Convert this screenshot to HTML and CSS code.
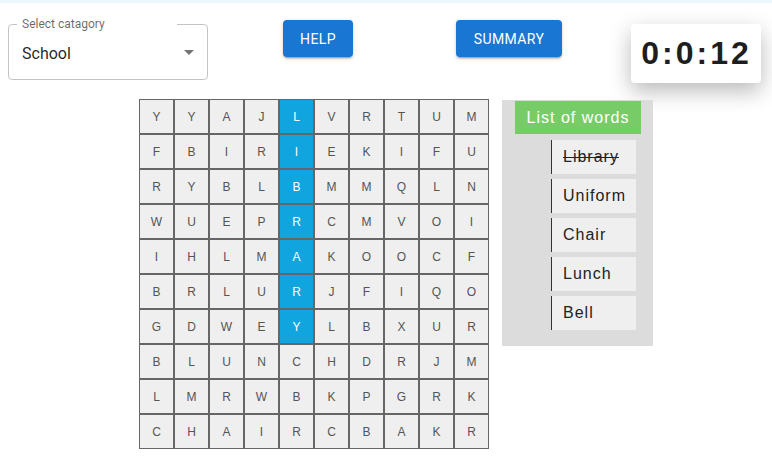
FILE: index.html
```html
<!DOCTYPE html>
<html>
<head>
<meta charset="utf-8">
<link rel="stylesheet" href="styles.css">
</head>
<body>
<div class="strip"></div>
<div class="top">
  <div class="select">
    <span class="select-label">Select catagory</span>
    <span class="select-value">School</span>
    <svg class="select-icon" viewBox="0 0 24 24" width="24" height="24"><path d="M7 10l5 5 5-5z" fill="rgba(0,0,0,0.54)"/></svg>
  </div>
  <button class="btn btn-help">HELP</button>
  <button class="btn btn-summary">SUMMARY</button>
  <div class="timer">0:0:12</div>
</div>
<div class="main">
  <div class="board">
    <div class="cell">Y</div><div class="cell">Y</div><div class="cell">A</div><div class="cell">J</div><div class="cell hit">L</div><div class="cell">V</div><div class="cell">R</div><div class="cell">T</div><div class="cell">U</div><div class="cell">M</div>
    <div class="cell">F</div><div class="cell">B</div><div class="cell">I</div><div class="cell">R</div><div class="cell hit">I</div><div class="cell">E</div><div class="cell">K</div><div class="cell">I</div><div class="cell">F</div><div class="cell">U</div>
    <div class="cell">R</div><div class="cell">Y</div><div class="cell">B</div><div class="cell">L</div><div class="cell hit">B</div><div class="cell">M</div><div class="cell">M</div><div class="cell">Q</div><div class="cell">L</div><div class="cell">N</div>
    <div class="cell">W</div><div class="cell">U</div><div class="cell">E</div><div class="cell">P</div><div class="cell hit">R</div><div class="cell">C</div><div class="cell">M</div><div class="cell">V</div><div class="cell">O</div><div class="cell">I</div>
    <div class="cell">I</div><div class="cell">H</div><div class="cell">L</div><div class="cell">M</div><div class="cell hit">A</div><div class="cell">K</div><div class="cell">O</div><div class="cell">O</div><div class="cell">C</div><div class="cell">F</div>
    <div class="cell">B</div><div class="cell">R</div><div class="cell">L</div><div class="cell">U</div><div class="cell hit">R</div><div class="cell">J</div><div class="cell">F</div><div class="cell">I</div><div class="cell">Q</div><div class="cell">O</div>
    <div class="cell">G</div><div class="cell">D</div><div class="cell">W</div><div class="cell">E</div><div class="cell hit">Y</div><div class="cell">L</div><div class="cell">B</div><div class="cell">X</div><div class="cell">U</div><div class="cell">R</div>
    <div class="cell">B</div><div class="cell">L</div><div class="cell">U</div><div class="cell">N</div><div class="cell">C</div><div class="cell">H</div><div class="cell">D</div><div class="cell">R</div><div class="cell">J</div><div class="cell">M</div>
    <div class="cell">L</div><div class="cell">M</div><div class="cell">R</div><div class="cell">W</div><div class="cell">B</div><div class="cell">K</div><div class="cell">P</div><div class="cell">G</div><div class="cell">R</div><div class="cell">K</div>
    <div class="cell">C</div><div class="cell">H</div><div class="cell">A</div><div class="cell">I</div><div class="cell">R</div><div class="cell">C</div><div class="cell">B</div><div class="cell">A</div><div class="cell">K</div><div class="cell">R</div>
  </div>
  <div class="panel">
    <div class="panel-title">List of words</div>
    <ul class="words">
      <li class="word found">Library</li>
      <li class="word">Uniform</li>
      <li class="word">Chair</li>
      <li class="word">Lunch</li>
      <li class="word">Bell</li>
    </ul>
  </div>
</div>
</body>
</html>
```
FILE: styles.css
```css
* { box-sizing: border-box; }
html, body { margin: 0; padding: 0; background: #fff; }
body { font-family: "Liberation Sans", Arial, sans-serif; width: 772px; height: 456px; overflow: hidden; }

.strip { height: 3px; background: #eef7fc; }

.top {
  height: 96px;
  padding: 17px 0 0 8px;
  display: flex;
  align-items: flex-start;
}

.select {
  position: relative;
  margin-top: 4px;
  width: 200px;
  height: 56px;
  border: 1px solid #c4c4c4;
  border-radius: 4px;
  display: flex;
  align-items: center;
  padding-left: 13px;
  font-family: Roboto, "Liberation Sans", sans-serif;
}
.select-label {
  position: absolute;
  left: 8px;
  top: -8px;
  padding: 0 72px 0 5px;
  background: #fff;
  font-size: 12px;
  line-height: 14px;
  color: rgba(0,0,0,0.6);
}
.select-value {
  font-size: 16px;
  color: rgba(0,0,0,0.87);
  margin-top: 2px;
}
.select-icon {
  position: absolute;
  right: 6px;
  top: 15px;
}

.btn {
  font-family: Roboto, "Liberation Sans", sans-serif;
  font-weight: 400;
  font-size: 14px;
  letter-spacing: 0.4px;
  color: #fff;
  background: #1976d2;
  border: none;
  border-radius: 4px;
  height: 37px;
  padding: 0 16px;
  box-shadow: 0 3px 1px -2px rgba(0,0,0,0.2), 0 2px 2px 0 rgba(0,0,0,0.14), 0 1px 5px 0 rgba(0,0,0,0.12);
}
.btn-help { margin-left: 75px; width: 70px; }
.btn-summary { margin-left: 103px; width: 106px; }

.timer {
  margin-top: 4px;
  margin-left: 69px;
  width: 130px;
  height: 59px;
  background: #fff;
  border-radius: 4px;
  box-shadow: 0 8px 22px rgba(0,0,0,0.28);
  font-weight: bold;
  font-size: 32px;
  letter-spacing: 3px;
  color: #1e1e1e;
  display: flex;
  align-items: center;
  justify-content: center;
  padding-left: 1px;
}

.main {
  display: flex;
  align-items: flex-start;
  padding-left: 139px;
}

.board {
  display: grid;
  grid-template-columns: repeat(10, 35px);
  grid-auto-rows: 35px;
}
.cell {
  border: 1px solid #666;
  background: #efefef;
  color: #555;
  font-size: 12px;
  display: flex;
  align-items: center;
  justify-content: center;
}
.cell.hit { background: #10a5de; color: #fff; }

.panel {
  margin-left: 13px;
  margin-top: 1px;
  width: 151px;
  background: #dcdcdc;
  padding: 1px 12px 16px 13px;
}
.panel-title {
  height: 33px;
  background: #78cc68;
  color: #fff;
  font-size: 16px;
  letter-spacing: 1px;
  display: flex;
  align-items: center;
  justify-content: center;
}
.words {
  list-style: none;
  margin: 6px 0 0 36px;
  padding: 0;
  display: flex;
  flex-direction: column;
  gap: 5px;
}
.word {
  width: 85px;
  height: 34px;
  background: #efefef;
  border-left: 1px solid #333;
  padding-left: 11px;
  display: flex;
  align-items: center;
  font-size: 16px;
  letter-spacing: 1px;
  color: #222;
}
.word.found { text-decoration: line-through; }
```
